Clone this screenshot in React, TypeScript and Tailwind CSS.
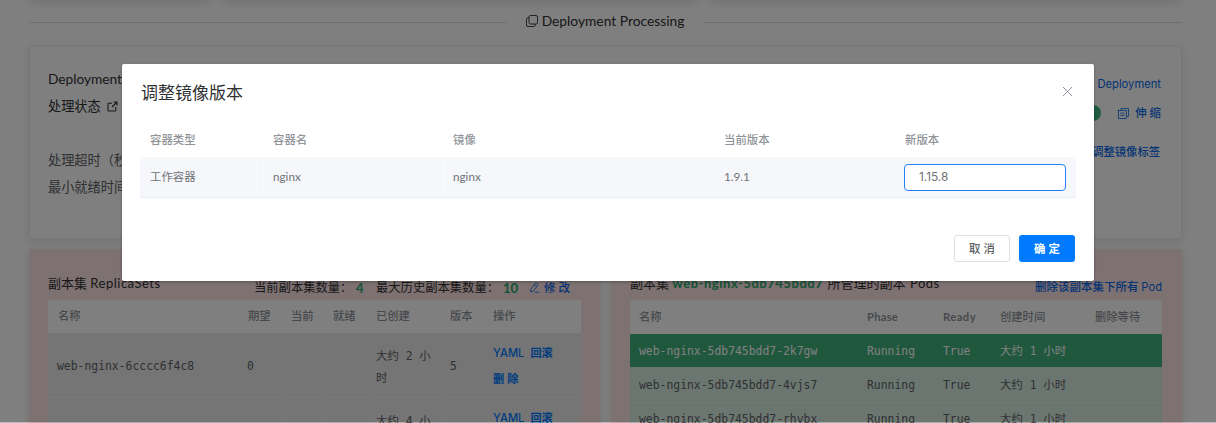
import type { ReactNode } from "react";

const SANS = "font-[Lato,'Noto_Sans_CJK_SC',sans-serif]";
const MONO = "font-['DejaVu_Sans_Mono','Noto_Sans_CJK_SC',monospace]";

function T({ w, className = "", children }: { w: string; className?: string; children?: ReactNode }) {
  return <div className={`shrink-0 whitespace-nowrap ${w} ${className}`}>{children}</div>;
}

function CopySquares() {
  return (
    <svg width="12" height="12" viewBox="0 0 12 12" fill="none" stroke="#303133" strokeWidth=".9">
      <rect x="3" y="0.5" width="8.5" height="8.5" rx="1.5" />
      <path d="M3 2.8H2A1.5 1.5 0 0 0 .5 4.3V10A1.5 1.5 0 0 0 2 11.5H7.7A1.5 1.5 0 0 0 9.2 10V9" />
    </svg>
  );
}

function ExternalIcon() {
  return (
    <svg width="11" height="11" viewBox="0 0 11 11" fill="none" stroke="#303133" strokeWidth="1.1">
      <path d="M5 2.2H1.6A.6.6 0 0 0 1 2.8V9.4A.6.6 0 0 0 1.6 10H8.2A.6.6 0 0 0 8.8 9.4V6" />
      <path d="M6.5 1H10V4.5M10 1L5 6" />
    </svg>
  );
}

function DocCopyIcon() {
  return (
    <svg width="11" height="11" viewBox="0 0 11 11" fill="none" stroke="#0a68e8" strokeWidth=".8">
      <path d="M3 2.3V.5H10.5V8.3H8.6" />
      <rect x=".5" y="2.4" width="7.8" height="8.1" />
      <path d="M2.3 5.2H6.5M2.3 7.4H6.5" />
    </svg>
  );
}

function EditIcon() {
  return (
    <svg width="11" height="11" viewBox="0 0 11 11" fill="none" stroke="#0a68e8" strokeWidth=".8">
      <path d="M6.4 1.2Q7 .4 7.9 1L8.7 1.6Q9.5 2.2 8.9 3L4.5 8.8L1.6 10L1.7 7.3ZM5.4 2.7L7.8 4.4M5.5 10.2H10" />
    </svg>
  );
}

function ReplicaRow({ name, age, rev }: { name: string; age: string; rev: string }) {
  return (
    <div className={`flex h-[65px] items-center border-b border-[#f2f2f2] bg-[#eaeaea] pl-[9px] text-[11.4px] text-[#606266] ${MONO}`}>
      <T w="w-[190px]" className="pt-[3px]">{name}</T>
      <T w="w-[36px]" className="pt-[3px]">{rev && "0"}</T>
      <T w="w-[42px]" className="h-full border-l border-[#efefef]" />
      <T w="w-[43px]" className="h-full border-l border-[#efefef]" />
      <T w="w-[74px]" className="flex h-full items-center border-l border-[#efefef] pl-[8px] pt-[4px] leading-[22px]">
        <span className="-ml-px">大约 {age} 小<br />{rev && "时"}&nbsp;</span>
      </T>
      <T w="w-[43px]" className="flex h-full items-center border-l border-[#efefef] pl-[7px] pt-[3px]">{rev}</T>
      <div className="shrink-0 pl-[8px] pt-[2px] font-[Inter,'Noto_Sans_CJK_SC',sans-serif] text-[11.2px] font-medium leading-[26px] text-[#007bff]">
        <div className="whitespace-nowrap">YAML <span className="ml-[3px] font-bold">回滚</span></div>
        <div className="h-[26px] font-bold tracking-[3px]">{rev && "删除"}</div>
      </div>
    </div>
  );
}

function PodRow({ name, tone }: { name: string; tone: string }) {
  return (
    <div className={`flex shrink-0 items-center pl-[9px] text-[11.4px] ${MONO} ${tone}`}>
      <T w="w-[228px]">{name}</T>
      <T w="w-[76px]">Running</T>
      <T w="w-[57px]">True</T>
      <T w="w-[94px]">大约 1 小时</T>
    </div>
  );
}

const card = "rounded-[3px] border border-[#ebeef5] shadow-[0_2px_10px_rgba(0,0,0,0.12)]";

function Page() {
  return (
    <div className="flex h-full flex-col pl-[29px] pr-[34px] text-[#303133]">
      <div className="-mt-[20px] flex h-[21px] shrink-0 gap-[11px]">
        <div className={`w-[182px] ${card}`} />
        <div className={`w-[475px] ${card}`} />
        <div className={`flex-1 ${card}`} />
      </div>
      <div className="flex h-[45px] shrink-0 items-center pb-[3px]">
        <div className="h-px w-[477px] bg-[#dcdfe6]" />
        <div className="flex flex-1 items-center justify-center gap-[4px] whitespace-nowrap pb-[2px] text-[13.8px]">
          <CopySquares />
          <span>Deployment Processing</span>
        </div>
        <div className="h-px w-[478px] bg-[#dcdfe6]" />
      </div>
      <div className={`flex h-[193px] shrink-0 justify-between pl-[18px] pr-[20px] ${card}`}>
        <div className="pt-[19px] text-[13.2px] leading-[27px]">
          <div className="h-[27px] text-[13.7px] leading-[26px]">Deployment</div>
          <div className="flex items-center gap-[6px]">处理状态 <ExternalIcon /></div>
          <div className="mt-[27px] text-[#606266]">处理超时（秒</div>
          <div className="text-[#606266]">最小就绪时间</div>
        </div>
        <div className="flex flex-col items-end pt-[28px] text-[12px] font-medium leading-[18px] text-[#0a68e8]">
          <div className="font-['Inter'] text-[11.2px] font-normal">Deployment</div>
          <div className="mt-[11px] flex items-center">
            <div className="mr-[17px] h-[16px] w-[40px] rounded-full bg-[#41b883]" />
            <DocCopyIcon />
            <span className="-mr-[3px] ml-[6px] text-[11.4px] tracking-[3px]">伸缩</span>
          </div>
          <div className="mt-[21px] pr-px text-[11.3px]">调整镜像标签</div>
        </div>
      </div>
      <div className="mt-[10px] flex h-[220px] shrink-0 gap-[11px]">
        <div className="w-[571px] shrink-0 rounded-[3px] bg-[#fde2e2] pl-[19px] shadow-[0_2px_10px_rgba(0,0,0,0.12)]">
          <div className="flex h-[51px] w-[533px] pt-[24px] text-[13px] leading-[20px]">
            <T w="w-[206px]">副本集 <span className="tracking-[0.5px]">ReplicaSets</span></T>
            <div className="flex items-center pt-[2px] text-[12.3px]">
              <T w="w-[102px]">当前副本集数量：</T>
              <T w="w-[20px]" className="text-[13px] font-bold text-[#28a76b]">4</T>
              <T w="w-[127px]">最大历史副本集数量：</T>
              <T w="w-[26px]" className="text-[13px] font-bold text-[#28a76b]">10</T>
              <EditIcon />
              <span className="ml-[4px] whitespace-nowrap text-[11.5px] font-medium tracking-[3px] text-[#0a68e8]">修改</span>
            </div>
          </div>
          <div className="w-[533px] bg-white">
            <div className="flex h-[33px] items-center pl-[10px] text-[11.3px] font-medium text-[#909399]">
              <T w="w-[190px]">名称</T><T w="w-[43px]">期望</T><T w="w-[42px]">当前</T><T w="w-[43px]">就绪</T>
              <T w="w-[74px]">已创建</T><T w="w-[43px]">版本</T><T w="w-[40px]">操作</T>
            </div>
            <ReplicaRow name="web-nginx-6cccc6f4c8" age="2" rev="5" />
            <ReplicaRow name="" age="4" rev="" />
          </div>
        </div>
        <div className="flex-1 rounded-[3px] bg-[#fde2e2] pl-[19px] shadow-[0_2px_10px_rgba(0,0,0,0.12)]">
          <div className="flex h-[51px] w-[532px] justify-between whitespace-nowrap pt-[24px] text-[13px] leading-[20px]">
            <div>副本集 <span className="font-bold tracking-[0.53px] text-[#28a76b]">web-nginx-5db745bdd7</span><span className="ml-px"> 所管理的副本 </span><span className="ml-px tracking-[0.5px]">Pods</span></div>
            <div className="pt-[4px] text-[11.5px] font-medium text-[#0a68e8]">删除该副本集下所有 <span className="font-['Inter'] text-[11.2px] font-normal">Pod</span></div>
          </div>
          <div className="w-[532px] bg-white">
            <div className="flex h-[34px] items-center pl-[9px] text-[11.3px] font-bold text-[#909399]">
              <T w="w-[228px]" className="font-medium">名称</T><T w="w-[76px]" className="tracking-[0.2px]">Phase</T><T w="w-[57px]" className="tracking-[0.4px]">Ready</T>
              <T w="w-[95px]" className="font-medium">创建时间</T><T w="w-[60px]" className="font-medium">删除等待</T>
            </div>
            <PodRow name="web-nginx-5db745bdd7-2k7gw" tone="h-[33px] pt-[2px] bg-[#41b07d] text-white" />
            <PodRow name="web-nginx-5db745bdd7-4vjs7" tone="h-[36px] pt-[2px] border-b border-[#dff3ea] bg-[#d7ede3] text-[#606266]" />
            <PodRow name="web-nginx-5db745bdd7-rhvbx" tone="h-[33px] pt-px bg-[#d7ede3] text-[#606266]" />
          </div>
        </div>
      </div>
    </div>
  );
}

function Dialog() {
  return (
    <div className="ml-[122px] mt-[64px] h-[217px] w-[972px] rounded-[2px] bg-white px-[18px] shadow-[0_1px_3px_rgba(0,0,0,0.3)]">
      <div className="flex h-[57px] items-center justify-between pr-[3px] text-[17px] text-[#303133]">
        <span className="pl-px">调整镜像版本</span>
        <svg className="mb-[2px]" width="11" height="11" viewBox="0 0 11 11" stroke="#909399" strokeWidth="1"><path d="M1 1L10 10M10 1L1 10" /></svg>
      </div>
      <div className="flex h-[36px] items-center pl-[10px] pt-[2px] text-[11.4px] font-medium text-[#909399]">
        <T w="w-[123px]">容器类型</T><T w="w-[180px]">容器名</T><T w="w-[271px]">镜像</T><T w="w-[181px]">当前版本</T><T w="w-[80px]">新版本</T>
      </div>
      <div className="flex h-[41px] items-center border-b border-[#ebeef5] bg-[#f5f7fb] pl-[10px] text-[11.7px] text-[#707276]">
        <T w="w-[113px]" className="text-[11.4px]">工作容器</T>
        <T w="w-[180px]" className="flex h-full items-center border-l border-[#f9fafc] pl-[9px]">nginx</T>
        <T w="w-[281px]" className="flex h-full items-center border-l border-[#f9fafc] pl-[9px]">nginx</T>
        <T w="w-[180px]">1.9.1</T>
        <div className="flex h-[27px] w-[162px] items-center rounded-[4px] border border-[#2680f5] bg-white pl-[14px] pt-[2px] font-['Inter'] text-[11.8px]">1.15.8</div>
      </div>
      <div className="flex justify-end gap-[9px] pr-px pt-[37px] text-[11.4px] font-medium">
        <div className="flex h-[27px] w-[56px] items-center justify-center rounded-[3px] border border-[#dcdfe6] pl-[3px] pt-px tracking-[3px] text-[#606266]">取消</div>
        <div className="flex h-[27px] w-[56px] items-center justify-center rounded-[3px] bg-[#007bff] pl-[3px] pt-px font-bold tracking-[3px] text-white">确定</div>
      </div>
    </div>
  );
}

export default function App() {
  return (
    <div className={`relative h-[423px] w-[1216px] overflow-hidden bg-white ${SANS}`}>
      <Page />
      <div className="absolute inset-0 flex flex-col">
        <div className="flex h-[422px] items-start bg-black/50"><Dialog /></div>
        <div className="h-px bg-black/25" />
      </div>
    </div>
  );
}
